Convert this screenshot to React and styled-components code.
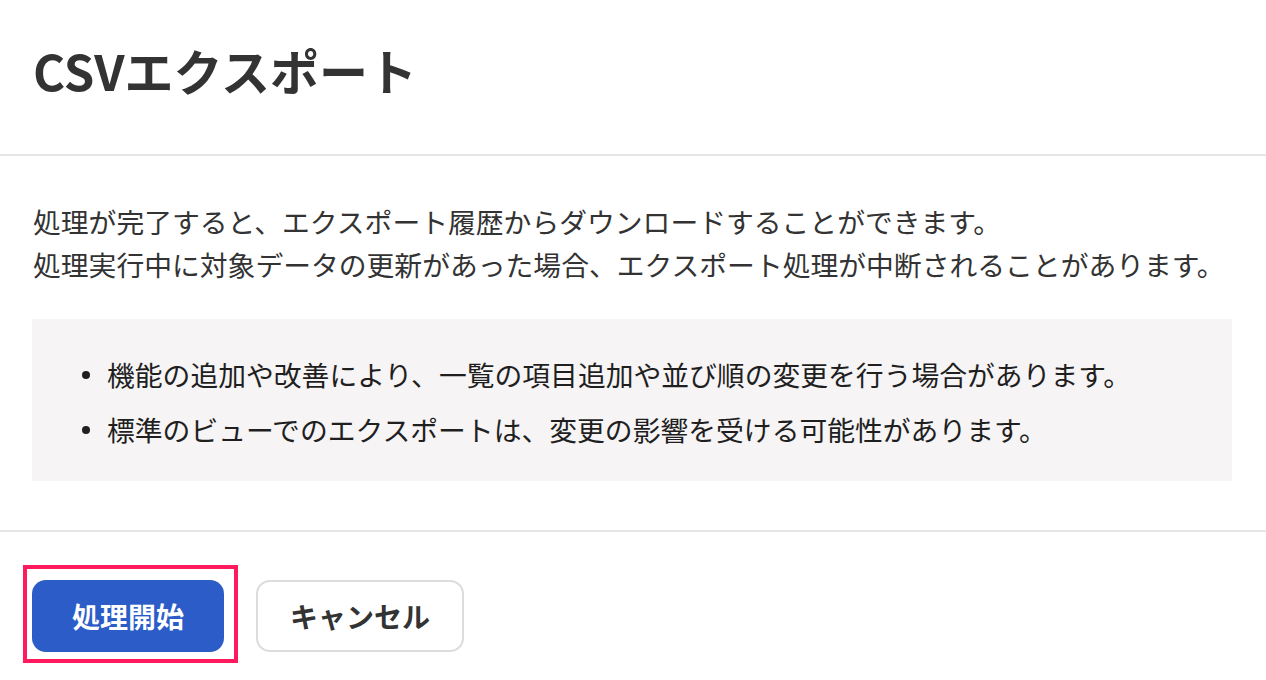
import React from 'react';
import styled, { createGlobalStyle } from 'styled-components';

const GlobalStyle = createGlobalStyle`
  html, body {
    margin: 0;
    padding: 0;
    background: #fff;
  }
  body {
    font-family: "Noto Sans CJK JP", "Noto Sans", sans-serif;
    color: #333;
  }
`;

const Dialog = styled.div`
  width: 1266px;
  height: 680px;
  background: #fff;
  overflow: hidden;
`;

const Header = styled.header`
  padding: 34px 33px 48px;
  border-bottom: 2px solid #e6e6e6;
`;

const Title = styled.h1`
  margin: 0;
  font-size: 49px;
  line-height: 72px;
  font-weight: 700;
  color: #333;
`;

const Body = styled.section`
  padding: 44px 34px 49px 33px;
  border-bottom: 2px solid #e6e6e6;
`;

const Lead = styled.p`
  margin: 0;
  font-size: 27.8px;
  line-height: 43px;
  color: #333;
  white-space: nowrap;
`;

const NoteBox = styled.div`
  margin: 33px 0 0 -1px;
  padding: 34px 40px 30px 50px;
  background: #f6f4f5;
`;

const NoteList = styled.ul`
  margin: 0;
  padding: 0;
  list-style: none;
  display: flex;
  flex-direction: column;
  gap: 12px;
`;

const NoteItem = styled.li`
  display: flex;
  align-items: center;
  gap: 17px;
  font-size: 27.8px;
  line-height: 43px;
  color: #1f1f1f;
  white-space: nowrap;

  &::before {
    content: '';
    width: 8px;
    height: 8px;
    border-radius: 50%;
    background: #1f1f1f;
    flex: none;
  }
`;

const Footer = styled.footer`
  display: flex;
  gap: 32px;
  padding: 48px 32px;
`;

const Highlight = styled.div`
  position: relative;

  &::after {
    content: '';
    position: absolute;
    left: -9px;
    top: -15px;
    right: -14px;
    bottom: -11px;
    border: 4.5px solid #ff1a5e;
    pointer-events: none;
  }
`;

const Button = styled.button`
  height: 72px;
  width: ${(p) => p.$width}px;
  border-radius: 14px;
  font-family: "Noto Sans CJK JP", "Noto Sans", sans-serif;
  font-size: 28px;
  font-weight: 700;
  cursor: pointer;
  background: ${(p) => (p.$primary ? '#2b5cc7' : '#fff')};
  color: ${(p) => (p.$primary ? '#fff' : '#333')};
  border: ${(p) => (p.$primary ? 'none' : '2px solid #dcdcdc')};
`;

const notes = [
  '機能の追加や改善により、一覧の項目追加や並び順の変更を行う場合があります。',
  '標準のビューでのエクスポートは、変更の影響を受ける可能性があります。',
];

const App = () => (
  <>
    <GlobalStyle />
    <Dialog>
      <Header>
        <Title>CSVエクスポート</Title>
      </Header>
      <Body>
        <Lead>
          処理が完了すると、エクスポート履歴からダウンロードすることができます。
          <br />
          処理実行中に対象データの更新があった場合、エクスポート処理が中断されることがあります。
        </Lead>
        <NoteBox>
          <NoteList>
            {notes.map((n) => (
              <NoteItem key={n}>{n}</NoteItem>
            ))}
          </NoteList>
        </NoteBox>
      </Body>
      <Footer>
        <Highlight>
          <Button $primary $width={192}>処理開始</Button>
        </Highlight>
        <Button $width={208}>キャンセル</Button>
      </Footer>
    </Dialog>
  </>
);

export default App;
